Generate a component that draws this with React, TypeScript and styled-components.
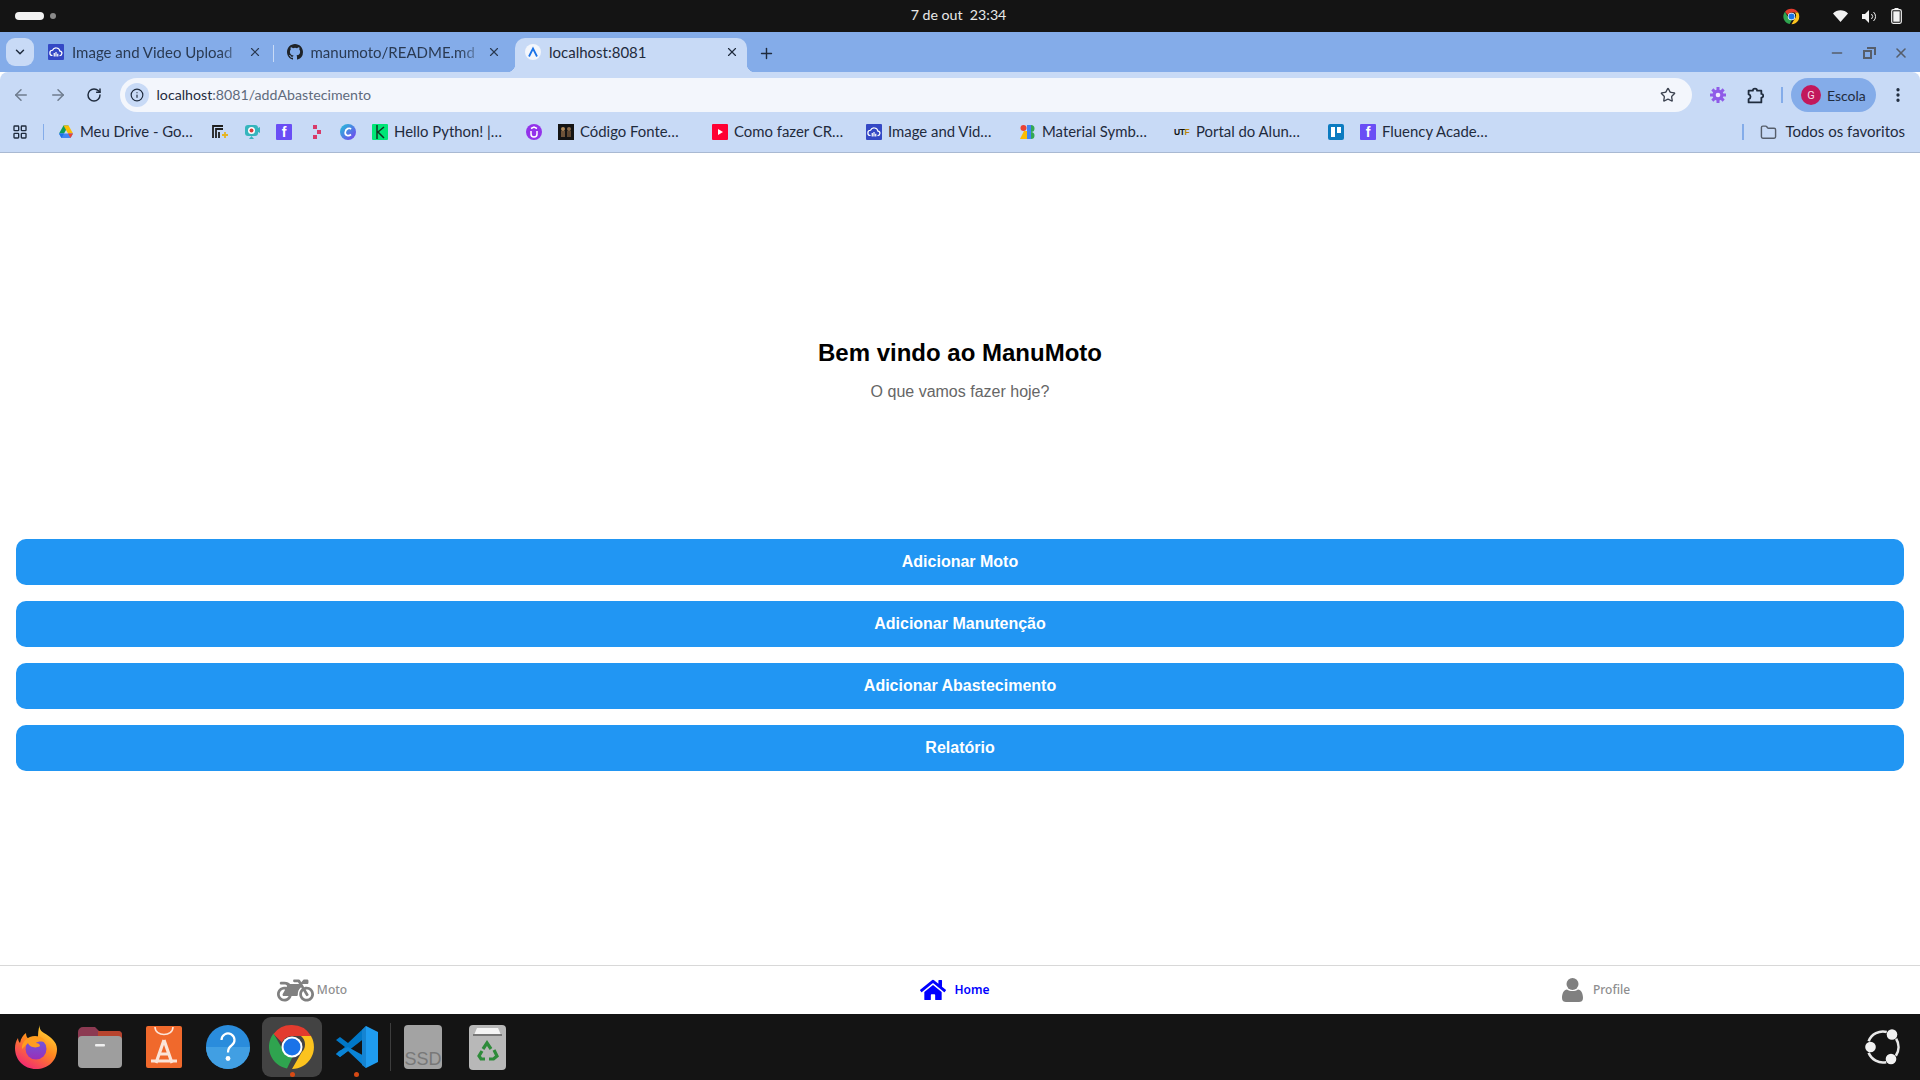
import React from "react";
import styled, { createGlobalStyle } from "styled-components";
import {
  ArrowLeft,
  ArrowRight,
  ChevronDown,
  Folder,
  Info,
  LayoutGrid,
  Minus,
  MoreVertical,
  Plus,
  RotateCw,
  Star,
  X,
} from "lucide-react";
import { FaHome, FaMotorcycle } from "react-icons/fa";

const GlobalStyle = createGlobalStyle`
  html, body { margin: 0; padding: 0; background: #fff; }
  * { box-sizing: border-box; }
  body { font-family: "Liberation Sans", Arial, sans-serif; }
`;

const UI_FONT = `Lato, "Noto Sans", sans-serif`;

const Screen = styled.div`
  width: 1920px;
  height: 1080px;
  display: flex;
  flex-direction: column;
  overflow: hidden;
`;

/* system top bar */
const TopBar = styled.div`
  height: 32px;
  background: #141414;
  display: grid;
  grid-template-columns: 1fr auto 1fr;
  align-items: center;
  padding: 0 18px 0 15px;
`;

const Workspaces = styled.div`
  display: flex;
  align-items: center;
  gap: 6px;
`;

const ActivePill = styled.span`
  width: 29px;
  height: 8px;
  border-radius: 4px;
  background: #f2f2f2;
`;

const WorkspaceDot = styled.span`
  width: 6px;
  height: 6px;
  border-radius: 50%;
  background: #8a8a8a;
`;

const Clock = styled.div`
  font: 14.2px ${UI_FONT};
  color: #e8e8e8;
  white-space: pre;
  padding-bottom: 3px;
`;

const Tray = styled.div`
  display: flex;
  align-items: center;
  justify-content: flex-end;
  gap: 14px;
`;

const TrayChrome = styled.span`
  display: flex;
  margin-right: 19px;
`;

/* chrome tab strip */
const TabStrip = styled.div`
  height: 40px;
  background: #84ace9;
  display: flex;
  align-items: flex-end;
  padding-left: 6px;
`;

const TabListButton = styled.div`
  width: 28px;
  height: 28px;
  margin: 0 4px 6px 0;
  border-radius: 9px;
  background: #c8daf6;
  color: #1f2b3d;
  display: flex;
  align-items: center;
  justify-content: center;
`;

const Tab = styled.div<{ $active?: boolean; $divider?: boolean }>`
  position: relative;
  width: 232px;
  height: 34px;
  margin-right: 6.5px;
  padding: 0 8px 6px 10px;
  display: flex;
  align-items: center;
  gap: 8px;
  border-radius: 10px 10px 0 0;
  background: ${(p) => (p.$active ? "#c8daf6" : "transparent")};
  color: ${(p) => (p.$active ? "#1f2b3d" : "#2a3a52")};

  ${(p) =>
    p.$divider &&
    `&::after {
      content: "";
      position: absolute;
      right: -4px;
      top: 7px;
      width: 1px;
      height: 17px;
      background: #c8daf6;
    }`}

  ${(p) =>
    p.$active &&
    `&::before {
      content: "";
      position: absolute;
      left: -8px;
      right: -8px;
      bottom: 0;
      height: 8px;
      background:
        radial-gradient(circle at 0 0, #84ace9 8px, #c8daf6 8.5px) left bottom / 8px 8px no-repeat,
        radial-gradient(circle at 100% 0, #84ace9 8px, #c8daf6 8.5px) right bottom / 8px 8px no-repeat;
    }`}
`;

const TabTitle = styled.span<{ $fade?: boolean }>`
  flex: 1;
  font: 15px ${UI_FONT};
  white-space: nowrap;
  overflow: hidden;
  ${(p) =>
    p.$fade &&
    `-webkit-mask-image: linear-gradient(90deg, #000 88%, rgba(0,0,0,.25) 100%);
     mask-image: linear-gradient(90deg, #000 88%, rgba(0,0,0,.25) 100%);`}
`;

const TabClose = styled.span`
  display: flex;
  position: relative;
  z-index: 1;
`;

const NewTab = styled.div`
  display: flex;
  margin: 0 0 10px 4px;
  color: #1f2b3d;
`;

const WindowControls = styled.div`
  margin-left: auto;
  display: flex;
  gap: 16px;
  padding: 0 11px 11px 0;
  color: #565e6b;
`;

/* chrome toolbar */
const Toolbar = styled.div`
  height: 40px;
  background: #c8daf6;
  border-radius: 8px 8px 0 0;
  display: flex;
  align-items: flex-start;
  padding: 6px 0 0 3px;
`;

const NavButton = styled.div<{ $dim?: boolean }>`
  width: 36.5px;
  height: 34px;
  display: flex;
  align-items: center;
  justify-content: center;
  color: ${(p) => (p.$dim ? "#6f7c8e" : "#1f2b3d")};
`;

const Omnibox = styled.div`
  flex: 1;
  height: 34px;
  margin-left: 7px;
  border-radius: 17px;
  background: #f3f6fc;
  display: flex;
  align-items: center;
  padding: 0 16px 0 5px;
`;

const SiteInfo = styled.div`
  width: 24px;
  height: 24px;
  border-radius: 50%;
  background: #c8daf6;
  color: #1f2b3d;
  display: flex;
  align-items: center;
  justify-content: center;
  margin-right: 8px;
`;

const Url = styled.div`
  flex: 1;
  font: 14.2px ${UI_FONT};
  color: #5f6b7c;
  padding-bottom: 2px;
  span {
    color: #1f2b3d;
  }
`;

const ToolbarRight = styled.div`
  width: 228px;
  height: 34px;
  display: flex;
  align-items: center;
  padding-left: 18px;
  color: #1f2b3d;
`;

const PuzzleSlot = styled.span`
  display: flex;
  margin-left: 21px;
`;

const ToolbarDivider = styled.span`
  width: 2px;
  height: 16px;
  margin: 0 8px 0 17px;
  background: #84ace9;
`;

const ProfilePill = styled.div`
  width: 85px;
  height: 34px;
  border-radius: 17px;
  background: #84ace9;
  display: flex;
  align-items: center;
  gap: 6px;
  padding-left: 10px;
  font: 14px ${UI_FONT};
  color: #1f2b3d;
`;

const MenuSlot = styled.span`
  display: flex;
  margin-left: 13px;
`;

const Avatar = styled.span`
  width: 20px;
  height: 20px;
  border-radius: 50%;
  background: #c2185b;
  color: #f6dbe6;
  font: 11px Roboto, sans-serif;
  display: flex;
  align-items: center;
  justify-content: center;
`;

/* bookmarks */
const Bookmarks = styled.div`
  height: 41px;
  background: #c8daf6;
  border-bottom: 1px solid #a9b9d2;
  display: flex;
  align-items: center;
  padding: 0 15px 0 12px;
  color: #1f2b3d;
`;

const AppsDivider = styled.span`
  width: 1px;
  height: 16px;
  margin: 0 14px 0 15px;
  background: #84ace9;
`;

const BookmarkList = styled.div`
  display: flex;
  align-items: center;
  gap: 16px;
`;

const Bookmark = styled.div`
  display: flex;
  align-items: center;
  gap: 6px;
`;

const BookmarkLabel = styled.span`
  width: 116px;
  font: 14.9px ${UI_FONT};
  white-space: nowrap;
  padding-bottom: 2px;
`;

const Favicon = styled.span<{ $bg: string; $fg?: string; $round?: boolean }>`
  width: 16px;
  height: 16px;
  flex: none;
  display: flex;
  align-items: center;
  justify-content: center;
  background: ${(p) => p.$bg};
  color: ${(p) => p.$fg || "#fff"};
  border-radius: ${(p) => (p.$round ? "50%" : "1px")};
  font: bold 14px "Liberation Sans", sans-serif;
  overflow: hidden;
`;

const UtfMark = styled.span`
  width: 18px;
  flex: none;
  margin-right: -2px;
  font: bold 8.500px "Liberation Sans", sans-serif;
  letter-spacing: -0.4px;
  color: #111;
  white-space: nowrap;
  b {
    color: #b8860b;
  }
`;

const AllBookmarks = styled.div`
  margin-left: auto;
  display: flex;
  align-items: center;
  gap: 8px;
  font: 15px ${UI_FONT};
  color: #1f2b3d;
  svg {
    color: #565e6b;
  }
`;

const AllLabel = styled.span`
  padding-bottom: 2px;
`;

const AllDivider = styled.span`
  width: 2px;
  height: 16px;
  margin-right: 8px;
  background: #84ace9;
`;

/* the app itself */
const Main = styled.main`
  flex: 1;
  background: #fff;
  display: flex;
  flex-direction: column;
`;

const Hero = styled.section`
  height: 386px;
  padding-top: 186px;
  text-align: center;
`;

const Title = styled.h1`
  margin: 0 0 16px;
  font: bold 24px/28px "Liberation Sans", Arial, sans-serif;
  color: #000;
`;

const Subtitle = styled.p`
  margin: 0;
  font: 16px/18px "Liberation Sans", Arial, sans-serif;
  color: #666;
`;

const Actions = styled.div`
  display: flex;
  flex-direction: column;
  gap: 16px;
  padding: 0 16px;
`;

const ActionButton = styled.button`
  height: 46px;
  border: 0;
  border-radius: 10px;
  background: #2196f3;
  color: #fff;
  font: bold 16px "Liberation Sans", Arial, sans-serif;
`;

const TabBar = styled.nav`
  height: 49px;
  background: #fff;
  border-top: 1px solid #d8d8d8;
  display: grid;
  grid-template-columns: repeat(3, 1fr);
`;

const TabBarItem = styled.div<{ $active?: boolean; $offset: number; $gap: number }>`
  display: flex;
  align-items: center;
  justify-content: center;
  gap: ${(p) => p.$gap}px;
  padding-right: ${(p) => p.$offset}px;
  color: ${(p) => (p.$active ? "#0000ff" : "#808080")};
`;

const TabBarLabel = styled.span<{ $active?: boolean }>`
  font: ${(p) => (p.$active ? 600 : 500)} 12px "Noto Sans", sans-serif;
  color: ${(p) => (p.$active ? "#0000ff" : "#8e8e8f")};
  padding-bottom: 2px;
`;

/* dock */
const Dock = styled.footer`
  height: 66px;
  background: #141414;
  display: flex;
  align-items: center;
  padding: 0 19px 0 15px;
`;

const DockSlot = styled.div<{ $width: number; $gapLeft?: number; $active?: boolean; $running?: boolean }>`
  position: relative;
  width: ${(p) => p.$width}px;
  height: 60px;
  margin-left: ${(p) => p.$gapLeft || 0}px;
  flex: none;
  display: flex;
  align-items: center;
  justify-content: center;
  border-radius: 9px;
  background: ${(p) => (p.$active ? "#434343" : "transparent")};

  ${(p) =>
    p.$running &&
    `&::after {
      content: "";
      position: absolute;
      left: 50%;
      bottom: 0;
      width: 5px;
      height: 5px;
      margin-left: -2.5px;
      border-radius: 50%;
      background: #d74a14;
    }`}
`;

const DockDivider = styled.span`
  width: 1px;
  height: 48px;
  margin: 0 6px 0 12px;
  background: #3d3d3d;
`;

const DockEnd = styled.div`
  margin-left: auto;
  display: flex;
`;

const ChromeLogo = ({ size }: { size: number }) => (
  <svg width={size} height={size} viewBox="0 0 48 48">
    <path d="M24 2a22 22 0 0 1 19 11H24a11 11 0 0 0-10 6.5L5.5 11A22 22 0 0 1 24 2z" fill="#e33b2e" />
    <path d="M5.5 10.5 15 27a11 11 0 0 0 10 6l-6 12.5A22 22 0 0 1 5.500 10.500z" fill="#2fa44f" />
    <path d="M43 13a22 22 0 0 1-19 33l9.500-16.500A11 11 0 0 0 33 13z" fill="#fcc31e" />
    <circle cx="24" cy="24" r="10.500" fill="#fff" />
    <circle cx="24" cy="24" r="8.500" fill="#1a73e8" />
  </svg>
);

const CloudIcon = () => (
  <Favicon $bg="#3448c5">
    <svg width="14" height="14" viewBox="0 0 16 16" fill="none" stroke="#fff" strokeWidth="1.4">
      <path d="M4 12a3 3 0 0 1 0-6 4.500 4.500 0 0 1 8.500 1A2.500 2.500 0 0 1 12 12" />
      <path d="M6 9v4M8 8v5M10 10v3" />
    </svg>
  </Favicon>
);

const GithubIcon = () => (
  <svg width="16" height="16" viewBox="0 0 16 16" fill="#1f2328">
    <path d="M8 0C3.580 0 0 3.580 0 8c0 3.540 2.290 6.530 5.470 7.590.4.070.55-.17.55-.38 0-.19-.01-.82-.01-1.490-2.010.37-2.530-.49-2.690-.94-.09-.23-.48-.94-.82-1.130-.28-.15-.68-.52-.01-.53.63-.01 1.080.58 1.230.82.720 1.210 1.870.870 2.330.660.070-.520.280-.870.510-1.070-1.780-.200-3.640-.890-3.640-3.950 0-.870.310-1.590.820-2.150-.080-.200-.360-1.020.080-2.120 0 0 .670-.210 2.200.820a7.400 7.400 0 0 1 4 0c1.530-1.040 2.200-.820 2.200-.820.440 1.100.160 1.920.080 2.120.510.560.820 1.270.820 2.150 0 3.070-1.870 3.750-3.650 3.950.290.250.540.730.540 1.480 0 1.070-.010 1.930-.010 2.200 0 .210.150.460.550.380A8.010 8.010 0 0 0 16 8c0-4.420-3.580-8-8-8z" />
  </svg>
);

const ExpoIcon = () => (
  <Favicon $bg="#f3f6fc" $round>
    <svg width="12" height="12" viewBox="0 0 12 12" fill="none" stroke="#1a73e8" strokeWidth="1.800">
      <path d="M2 10.500 6 2.500l4 8" />
    </svg>
  </Favicon>
);

const DriveIcon = () => (
  <svg width="16" height="16" viewBox="0 0 16 16">
    <path d="M5.500 1.500h5L6 9.500H1z" fill="#0f9d58" />
    <path d="M10.500 1.500l4.500 8h-5L5.500 1.500z" fill="#fbbc04" />
    <path d="M1 9.500h14l-2.500 4.500h-9z" fill="#4285f4" />
    <path d="M1 9.500h5l-2.500 4.500z" fill="#1a73e8" />
    <path d="M10 9.500h5L12.500 14z" fill="#ea4335" />
  </svg>
);

const BracketIcon = () => (
  <svg width="16" height="16" viewBox="0 0 16 16" fill="none">
    <path d="M1 14V2h10M4 14V5h7M7 14V8" stroke="#1f1f1f" strokeWidth="1.800" />
    <path d="M10 11h6M13 8v6" stroke="#e6b422" strokeWidth="1.800" />
  </svg>
);

const CameraIcon = () => (
  <svg width="16" height="16" viewBox="0 0 16 16">
    <rect x="1" y="1" width="13" height="11" rx="3" fill="#35b5bd" />
    <path d="M14 4l2-1v6l-2-1z" fill="#35b5bd" />
    <circle cx="7.500" cy="6.500" r="3.500" fill="#fff" />
    <circle cx="7.500" cy="6.500" r="2" fill="#d83a3a" />
    <path d="M5 15l2.500-3L10 15z" fill="#35b5bd" />
  </svg>
);

const PixelIcon = () => (
  <svg width="16" height="16" viewBox="0 0 16 16" fill="#d83a6a">
    <rect x="5" y="1" width="4" height="4" />
    <rect x="9" y="6" width="4" height="4" />
    <rect x="5" y="11" width="4" height="4" />
  </svg>
);

const CanvaIcon = () => (
  <svg width="16" height="16" viewBox="0 0 16 16">
    <defs>
      <linearGradient id="canvaBg" x1="0" y1="0" x2="1" y2="1">
        <stop offset="0" stopColor="#21c4d8" />
        <stop offset="1" stopColor="#7a3df0" />
      </linearGradient>
    </defs>
    <circle cx="8" cy="8" r="8" fill="url(#canvaBg)" />
    <path d="M11 5.200C9.500 3.300 5.500 4.500 5.200 8.500c-.2 3.300 3.500 4 5.800 2" fill="none" stroke="#fff" strokeWidth="1.700" />
  </svg>
);

const KaggleMark = () => (
  <Favicon $bg="#00e676">
    <svg width="12" height="14" viewBox="0 0 12 14" fill="none" stroke="#123524" strokeWidth="1.500">
      <path d="M3 0v14M10 2 4 7l6 6" />
    </svg>
  </Favicon>
);

const UdemyIcon = () => (
  <Favicon $bg="#9333ea" $round>
    <svg width="10" height="12" viewBox="0 0 10 12" fill="none" stroke="#fff" strokeWidth="1.500">
      <path d="M2 5v3a3 3 0 0 0 6 0V5M2 2.500l3-1.500 3 1.500" />
    </svg>
  </Favicon>
);

const BookCoverIcon = () => (
  <svg width="16" height="16" viewBox="0 0 16 16">
    <rect width="16" height="16" fill="#141414" />
    <circle cx="5" cy="5" r="2" fill="#b08a5a" />
    <circle cx="11" cy="5" r="2" fill="#8a6a4a" />
    <rect x="3" y="7" width="4" height="6" fill="#6d5238" />
    <rect x="9" y="7" width="4" height="6" fill="#5d4630" />
  </svg>
);

const MaterialIcon = () => (
  <svg width="16" height="16" viewBox="0 0 16 16">
    <circle cx="3.500" cy="4" r="3" fill="#ea4335" />
    <path d="M0 15 4 7h3v8z" fill="#fbbc04" />
    <path d="M7 1h4v14H7z" fill="#4285f4" />
    <path d="M11 1a3.500 3.500 0 0 1 0 7zM11 8a3.500 3.500 0 0 1 0 7z" fill="#34a853" />
  </svg>
);

const YoutubeIcon = () => (
  <Favicon $bg="#ff0033">
    <svg width="10" height="10" viewBox="0 0 10 10" fill="#fff">
      <path d="M3 2l5 3-5 3z" />
    </svg>
  </Favicon>
);

const TrelloIcon = () => (
  <svg width="16" height="16" viewBox="0 0 16 16">
    <rect width="16" height="16" rx="2" fill="#0c7bc0" />
    <rect x="3" y="3" width="4" height="10" fill="#fff" />
    <rect x="9" y="3" width="4" height="6" fill="#fff" />
  </svg>
);

const GearIcon = () => (
  <svg width="16" height="16" viewBox="0 0 16 16">
    <g fill="#8f5be8">
      <circle cx="8" cy="8" r="5.500" />
      {[0, 45, 90, 135, 180, 225, 270, 315].map((a) => (
        <rect key={a} x="6.500" y="0" width="3" height="3.500" transform={`rotate(${a} 8 8)`} />
      ))}
    </g>
    <circle cx="8" cy="8" r="2.300" fill="#f1e9ff" />
  </svg>
);

const ExtensionIcon = () => (
  <svg width="17" height="17" viewBox="0 0 16 16" fill="none" stroke="currentColor" strokeWidth="1.700" strokeLinejoin="round">
    <path d="M1.500 3.500H5.500a2 2 0 0 1 4 0h4V6.500a1.700 1.700 0 0 1 0 3.500V14.500H1.500V11.500a2.300 2.300 0 0 0 0-4.500z" />
  </svg>
);

const WifiIcon = () => (
  <svg width="15" height="12" viewBox="0 0 15 12">
    <path d="M0 3.500C4-.8 11-.8 15 3.500L7.500 12z" fill="#f2f2f2" />
  </svg>
);

const VolumeIcon = () => (
  <svg width="15" height="13" viewBox="0 0 15 13" fill="none">
    <path d="M0 4h3l4-4v13l-4-4H0z" fill="#f2f2f2" />
    <path d="M9.500 4a3.500 3.500 0 0 1 0 5M11.500 2a6 6 0 0 1 0 9" stroke="#f2f2f2" strokeWidth="1" />
  </svg>
);

const BatteryIcon = () => (
  <svg width="11" height="16" viewBox="0 0 11 16">
    <rect x="3.500" y="0" width="4" height="2" fill="#f2f2f2" />
    <rect x=".7" y="1.700" width="9.600" height="13.600" rx="1.500" fill="none" stroke="#f2f2f2" strokeWidth="1.200" />
    <rect x="2.300" y="3.300" width="6.400" height="10.400" fill="#f2f2f2" />
  </svg>
);

const FirefoxIcon = () => (
  <svg width="42" height="44" viewBox="0 0 42 44">
    <defs>
      <linearGradient id="ffOuter" x1="0.8" y1="0" x2="0.2" y2="1">
        <stop offset="0" stopColor="#ffe13a" />
        <stop offset="0.45" stopColor="#ff8a1f" />
        <stop offset="1" stopColor="#f0207a" />
      </linearGradient>
      <linearGradient id="ffPurple" x1="0.5" y1="0" x2="0.5" y2="1">
        <stop offset="0" stopColor="#6a5be0" />
        <stop offset="1" stopColor="#9a2fb8" />
      </linearGradient>
    </defs>
    <path
      d="M25 0c-1 4 1 6 4 8 7 4 13 9 13 16 0 12-9 20-21 20C9 44 0 35 0 23c0-4 1-7 3-10 0 2 1 4 2 5 1-5 3-8 6-10 0 3 1 5 3 6 3-1 6-1 9 0 0-5 0-10 2-14z"
      fill="url(#ffOuter)"
    />
    <circle cx="21" cy="24" r="10.500" fill="url(#ffPurple)" />
    <path d="M7 24c-1-7 6-13 13-13 6 0 10 3 11 7-3-2-8-2-10 0 2 0 4 1 4 3-4 3-11 1-12-3-2 2-4 4-6 6z" fill="#ff9d1f" />
  </svg>
);

const FilesIcon = () => (
  <svg width="44" height="41" viewBox="0 0 44 41">
    <path d="M0 5a5 5 0 0 1 5-5h12l4 4h19a4 4 0 0 1 4 4v8H0z" fill="#8c3a52" />
    <path d="M20 4h20a4 4 0 0 1 4 4v6H20z" fill="#b8442e" />
    <rect y="9" width="44" height="32" rx="4" fill="#9e9e9e" />
    <rect x="17" y="17" width="10" height="2.500" rx="1" fill="#efefef" />
  </svg>
);

const StoreIcon = () => (
  <svg width="36" height="42" viewBox="0 0 36 42">
    <path d="M2 0h32a2 2 0 0 1 2 2v38a2 2 0 0 1-2 2H2a2 2 0 0 1-2-2V2a2 2 0 0 1 2-2z" fill="#f0692c" />
    <path d="M9 1c0 10 18 10 18 0" fill="none" stroke="#fbe4d8" strokeWidth="1.600" />
    <path d="M18 14 10 37M18 14l8 23M12 28h12M5 35h26" fill="none" stroke="#fbe4d8" strokeWidth="3.200" />
  </svg>
);

const HelpIcon = () => (
  <svg width="44" height="44" viewBox="0 0 44 44">
    <circle cx="22" cy="22" r="22" fill="#2a8cdc" />
    <path d="M0 22a22 22 0 0 0 44 0z" fill="#419fe3" />
    <path d="M15.500 15a6.500 6.500 0 1 1 10 5.500c-2.500 1.700-3.500 3-3.500 7" fill="none" stroke="#fff" strokeWidth="2.200" />
    <circle cx="22" cy="33.500" r="2.400" fill="#fff" />
  </svg>
);

const VSCodeIcon = () => (
  <svg width="43" height="42" viewBox="0 0 43 42">
    <path d="M31 0 43 6v30l-12 6z" fill="#1f9cf0" />
    <path d="M31 0v11L13 25l-8 6-4-3 9-7-9-7 4-3 8 6z" fill="#0078c8" />
    <path d="M31 42 13 25l-8 6-4-3 3-3 9-4 18 10z" fill="#0a84d6" />
    <path d="M31 0v42l-4-3V4z" fill="#1584d2" />
  </svg>
);

const SsdIcon = () => (
  <svg width="38" height="44" viewBox="0 0 38 44">
    <rect width="38" height="44" rx="4" fill="#a3a3a3" />
    <text x="19" y="40" textAnchor="middle" fontFamily="Liberation Sans, sans-serif" fontSize="18" fill="#787878">
      SSD
    </text>
  </svg>
);

const TrashIcon = () => (
  <svg width="37" height="45" viewBox="0 0 37 45">
    <rect width="37" height="45" rx="4" fill="#b8b8b8" />
    <path d="M5 10 8 3h21l3 7z" fill="#f4f4f4" />
    <rect x="4" y="9" width="29" height="2" fill="#777" />
    <g fill="none" stroke="#2e8b3a" strokeWidth="3.200">
      <path d="M14 24l4-6 4 6" />
      <path d="M25 25l3 6-3.500 3H20" />
      <path d="M16 34h-4l-2-3 3-5" />
    </g>
  </svg>
);

const UbuntuLogo = () => (
  <svg width="36" height="36" viewBox="0 0 36 36">
    <g fill="none" stroke="#e8e8e8" strokeWidth="2.600">
      <path d="M31.140 9.790A15.500 15.500 0 0 1 30.850 26.670" />
      <path d="M21.220 33.160A15.500 15.500 0 0 1 3.630 23.810" />
      <path d="M3.630 12.190A15.500 15.500 0 0 1 21.750 2.960" />
    </g>
    <circle cx="27" cy="5.500" r="5.300" fill="#f2f2f2" />
    <circle cx="5.500" cy="18" r="5.300" fill="#f2f2f2" />
    <circle cx="26" cy="30" r="5.300" fill="#f2f2f2" />
  </svg>
);

const PersonIcon = () => (
  <svg width="21" height="24" viewBox="0 0 21 24" fill="#808080">
    <circle cx="10.500" cy="6" r="6" />
    <path d="M0 20c0-5 2-8 5-8.500 3 2 8 2 11 0 3 .5 5 3.500 5 8.500 0 3-2 4-4 4H4c-2 0-4-1-4-4z" />
  </svg>
);

const bookmarkItems: { icon: React.ReactNode; label?: string }[] = [
  { icon: <DriveIcon />, label: "Meu Drive - Go…" },
  { icon: <BracketIcon /> },
  { icon: <CameraIcon /> },
  { icon: <Favicon $bg="#6a4ef5">f</Favicon> },
  { icon: <PixelIcon /> },
  { icon: <CanvaIcon /> },
  { icon: <KaggleMark />, label: "Hello Python! |…" },
  { icon: <UdemyIcon /> },
  { icon: <BookCoverIcon />, label: "Código Fonte…" },
  { icon: <YoutubeIcon />, label: "Como fazer CR…" },
  { icon: <CloudIcon />, label: "Image and Vid…" },
  { icon: <MaterialIcon />, label: "Material Symb…" },
  {
    icon: (
      <UtfMark>
        UT<b>F</b>
      </UtfMark>
    ),
    label: "Portal do Alun…",
  },
  { icon: <TrelloIcon /> },
  { icon: <Favicon $bg="#6a4ef5">f</Favicon>, label: "Fluency Acade…" },
];

const actions = ["Adicionar Moto", "Adicionar Manutenção", "Adicionar Abastecimento", "Relatório"];

export default function App() {
  return (
    <Screen>
      <GlobalStyle />
      <TopBar>
        <Workspaces>
          <ActivePill />
          <WorkspaceDot />
        </Workspaces>
        <Clock>7 de out  23:34</Clock>
        <Tray>
          <TrayChrome>
            <ChromeLogo size={17} />
          </TrayChrome>
          <WifiIcon />
          <VolumeIcon />
          <BatteryIcon />
        </Tray>
      </TopBar>

      <TabStrip>
        <TabListButton>
          <ChevronDown size={14} strokeWidth={2.5} />
        </TabListButton>
        <Tab $divider>
          <CloudIcon />
          <TabTitle $fade>Image and Video Upload</TabTitle>
          <TabClose>
            <X size={14} />
          </TabClose>
        </Tab>
        <Tab>
          <GithubIcon />
          <TabTitle $fade>manumoto/README.md</TabTitle>
          <TabClose>
            <X size={14} />
          </TabClose>
        </Tab>
        <Tab $active>
          <ExpoIcon />
          <TabTitle>localhost:8081</TabTitle>
          <TabClose>
            <X size={14} />
          </TabClose>
        </Tab>
        <NewTab>
          <Plus size={17} />
        </NewTab>
        <WindowControls>
          <Minus size={16} />
          <svg width="16" height="16" viewBox="0 0 16 16" fill="none" stroke="currentColor" strokeWidth="2">
            <path d="M6 3h8v7M3 6h7v7H3z" />
          </svg>
          <X size={16} strokeWidth={2.4} />
        </WindowControls>
      </TabStrip>

      <Toolbar>
        <NavButton $dim>
          <ArrowLeft size={18} />
        </NavButton>
        <NavButton $dim>
          <ArrowRight size={18} />
        </NavButton>
        <NavButton>
          <RotateCw size={16} strokeWidth={2.2} />
        </NavButton>
        <Omnibox>
          <SiteInfo>
            <Info size={14} />
          </SiteInfo>
          <Url>
            <span>localhost</span>:8081/addAbastecimento
          </Url>
          <Star size={16} color="#3c4350" />
        </Omnibox>
        <ToolbarRight>
          <GearIcon />
          <PuzzleSlot>
            <ExtensionIcon />
          </PuzzleSlot>
          <ToolbarDivider />
          <ProfilePill>
            <Avatar>G</Avatar>
            Escola
          </ProfilePill>
          <MenuSlot>
            <MoreVertical size={18} strokeWidth={2.4} />
          </MenuSlot>
        </ToolbarRight>
      </Toolbar>

      <Bookmarks>
        <LayoutGrid size={16} />
        <AppsDivider />
        <BookmarkList>
          {bookmarkItems.map((b, i) => (
            <Bookmark key={i}>
              {b.icon}
              {b.label && <BookmarkLabel>{b.label}</BookmarkLabel>}
            </Bookmark>
          ))}
        </BookmarkList>
        <AllBookmarks>
          <AllDivider />
          <Folder size={17} />
          <AllLabel>Todos os favoritos</AllLabel>
        </AllBookmarks>
      </Bookmarks>

      <Main>
        <Hero>
          <Title>Bem vindo ao ManuMoto</Title>
          <Subtitle>O que vamos fazer hoje?</Subtitle>
        </Hero>
        <Actions>
          {actions.map((a) => (
            <ActionButton key={a}>{a}</ActionButton>
          ))}
        </Actions>
      </Main>

      <TabBar>
        <TabBarItem $offset={16} $gap={3}>
          <FaMotorcycle size={37} />
          <TabBarLabel>Moto</TabBarLabel>
        </TabBarItem>
        <TabBarItem $active $offset={10} $gap={8}>
          <FaHome size={26} />
          <TabBarLabel $active>Home</TabBarLabel>
        </TabBarItem>
        <TabBarItem $offset={8} $gap={10}>
          <PersonIcon />
          <TabBarLabel>Profile</TabBarLabel>
        </TabBarItem>
      </TabBar>

      <Dock>
        <DockSlot $width={42}>
          <FirefoxIcon />
        </DockSlot>
        <DockSlot $width={44} $gapLeft={21}>
          <FilesIcon />
        </DockSlot>
        <DockSlot $width={36} $gapLeft={24}>
          <StoreIcon />
        </DockSlot>
        <DockSlot $width={44} $gapLeft={24}>
          <HelpIcon />
        </DockSlot>
        <DockSlot $width={60} $gapLeft={12} $active $running>
          <ChromeLogo size={48} />
        </DockSlot>
        <DockSlot $width={43} $gapLeft={13} $running>
          <VSCodeIcon />
        </DockSlot>
        <DockDivider />
        <DockSlot $width={38} $gapLeft={7}>
          <SsdIcon />
        </DockSlot>
        <DockSlot $width={37} $gapLeft={27}>
          <TrashIcon />
        </DockSlot>
        <DockEnd>
          <UbuntuLogo />
        </DockEnd>
      </Dock>
    </Screen>
  );
}
